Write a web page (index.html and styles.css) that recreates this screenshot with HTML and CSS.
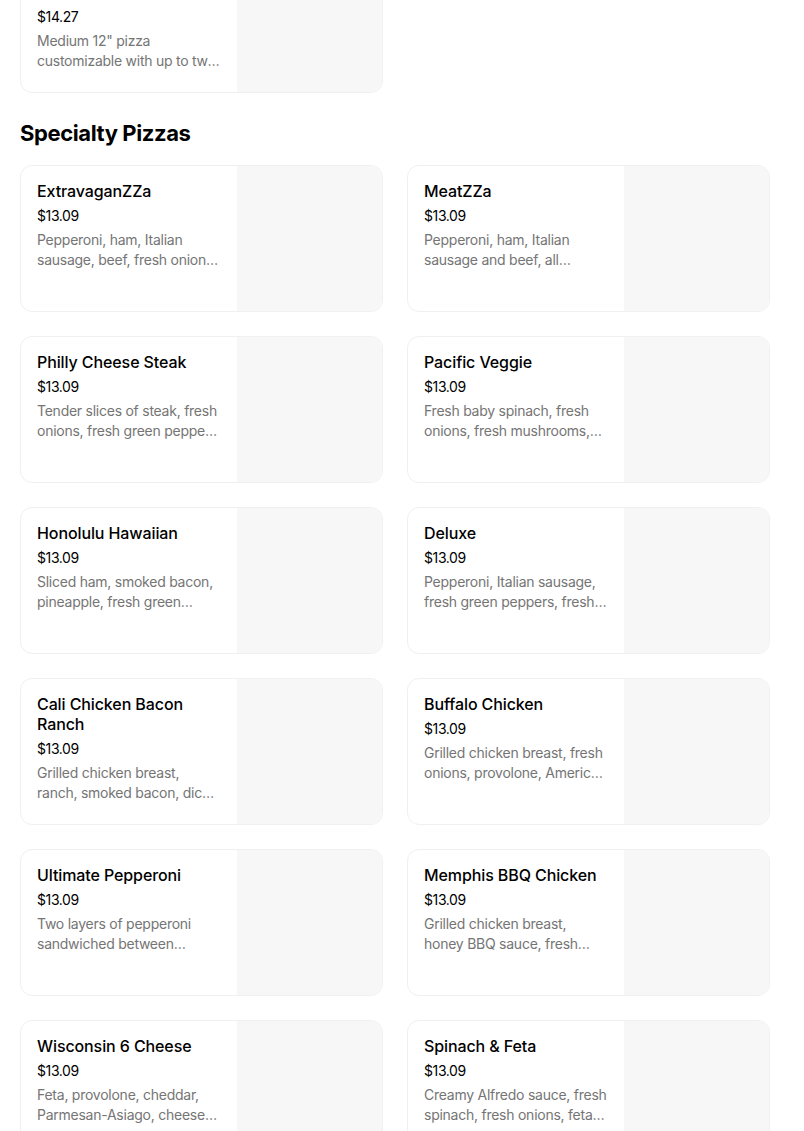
FILE: index.html
```html
<!DOCTYPE html>
<html lang="en">
<head>
<meta charset="utf-8">
<title>Specialty Pizzas</title>
<link rel="stylesheet" href="styles.css">
</head>
<body>
<main class="menu">
  <section class="section section-top">
    <div class="grid">
      <div class="card">
        <div class="info">
          <div class="title">Medium 2-Topping Pizza</div>
          <div class="price">$14.27</div>
          <div class="desc">Medium 12" pizza customizable with up to two toppings of your choice</div>
        </div>
        <div class="thumb"></div>
      </div>
    </div>
  </section>

  <section class="section">
    <h2 class="heading">Specialty Pizzas</h2>
    <div class="grid">
      <div class="card"><div class="info"><div class="title">ExtravaganZZa</div><div class="price">$13.09</div><div class="desc">Pepperoni, ham, Italian sausage, beef, fresh onions, fresh green peppers, fresh mushrooms and black olives</div></div><div class="thumb"></div></div>
      <div class="card"><div class="info"><div class="title">MeatZZa</div><div class="price">$13.09</div><div class="desc">Pepperoni, ham, Italian sausage and beef, all sandwiched between two layers of cheese</div></div><div class="thumb"></div></div>
      <div class="card"><div class="info"><div class="title">Philly Cheese Steak</div><div class="price">$13.09</div><div class="desc">Tender slices of steak, fresh onions, fresh green peppers, fresh mushrooms and provolone</div></div><div class="thumb"></div></div>
      <div class="card"><div class="info"><div class="title">Pacific Veggie</div><div class="price">$13.09</div><div class="desc">Fresh baby spinach, fresh onions, fresh mushrooms, tomatoes, black olives, feta</div></div><div class="thumb"></div></div>
      <div class="card"><div class="info"><div class="title">Honolulu Hawaiian</div><div class="price">$13.09</div><div class="desc">Sliced ham, smoked bacon, pineapple, fresh green peppers and provolone</div></div><div class="thumb"></div></div>
      <div class="card"><div class="info"><div class="title">Deluxe</div><div class="price">$13.09</div><div class="desc">Pepperoni, Italian sausage, fresh green peppers, fresh mushrooms and fresh onions</div></div><div class="thumb"></div></div>
      <div class="card"><div class="info"><div class="title">Cali Chicken Bacon Ranch</div><div class="price">$13.09</div><div class="desc">Grilled chicken breast, ranch, smoked bacon, diced tomatoes, provolone and mozzarella</div></div><div class="thumb"></div></div>
      <div class="card"><div class="info"><div class="title">Buffalo Chicken</div><div class="price">$13.09</div><div class="desc">Grilled chicken breast, fresh onions, provolone, American cheese, cheddar and mozzarella</div></div><div class="thumb"></div></div>
      <div class="card"><div class="info"><div class="title">Ultimate Pepperoni</div><div class="price">$13.09</div><div class="desc">Two layers of pepperoni sandwiched between provolone, Parmesan-Asiago and mozzarella</div></div><div class="thumb"></div></div>
      <div class="card"><div class="info"><div class="title">Memphis BBQ Chicken</div><div class="price">$13.09</div><div class="desc">Grilled chicken breast, honey BBQ sauce, fresh onions, provolone, cheddar and mozzarella</div></div><div class="thumb"></div></div>
      <div class="card"><div class="info"><div class="title">Wisconsin 6 Cheese</div><div class="price">$13.09</div><div class="desc">Feta, provolone, cheddar, Parmesan-Asiago, cheese made with 100% real mozzarella</div></div><div class="thumb"></div></div>
      <div class="card"><div class="info"><div class="title">Spinach &amp; Feta</div><div class="price">$13.09</div><div class="desc">Creamy Alfredo sauce, fresh spinach, fresh onions, feta, Parmesan-Asiago and provolone</div></div><div class="thumb"></div></div>
    </div>
  </section>
</main>
</body>
</html>
```

FILE: styles.css
```css
html, body {
  margin: 0;
  padding: 0;
  background: #ffffff;
}

body {
  font-family: Inter, "Noto Sans", "Liberation Sans", sans-serif;
  color: #000000;
  overflow: hidden;
}

.menu {
  width: 750px;
  padding-left: 20px;
}

.section-top {
  margin-top: -54px;
}

.heading {
  margin: 24px 0 16px;
  font-size: 22px;
  line-height: 32px;
  font-weight: 700;
  letter-spacing: -0.4px;
}

.grid {
  display: grid;
  grid-template-columns: 1fr 1fr;
  column-gap: 24px;
  row-gap: 24px;
}

.card {
  display: flex;
  box-sizing: border-box;
  min-height: 147px;
  border: 1px solid #f0f0f0;
  border-radius: 12px;
  overflow: hidden;
  background: #ffffff;
}

.info {
  flex: 1;
  min-width: 0;
  padding: 15px 16px 16px;
  display: flex;
  flex-direction: column;
  gap: 4px;
}

.title {
  font-size: 16px;
  line-height: 20px;
  font-weight: 500;
  letter-spacing: -0.1px;
  color: #000000;
}

.price {
  font-size: 14px;
  line-height: 20px;
  letter-spacing: -0.4px;
  color: #000000;
  margin-top: 1px;
}

.desc {
  font-size: 14px;
  line-height: 20px;
  letter-spacing: -0.25px;
  color: #757575;
  display: -webkit-box;
  -webkit-line-clamp: 2;
  -webkit-box-orient: vertical;
  overflow: hidden;
}

.thumb {
  flex: 0 0 145px;
  background: #f7f7f7;
}
```
